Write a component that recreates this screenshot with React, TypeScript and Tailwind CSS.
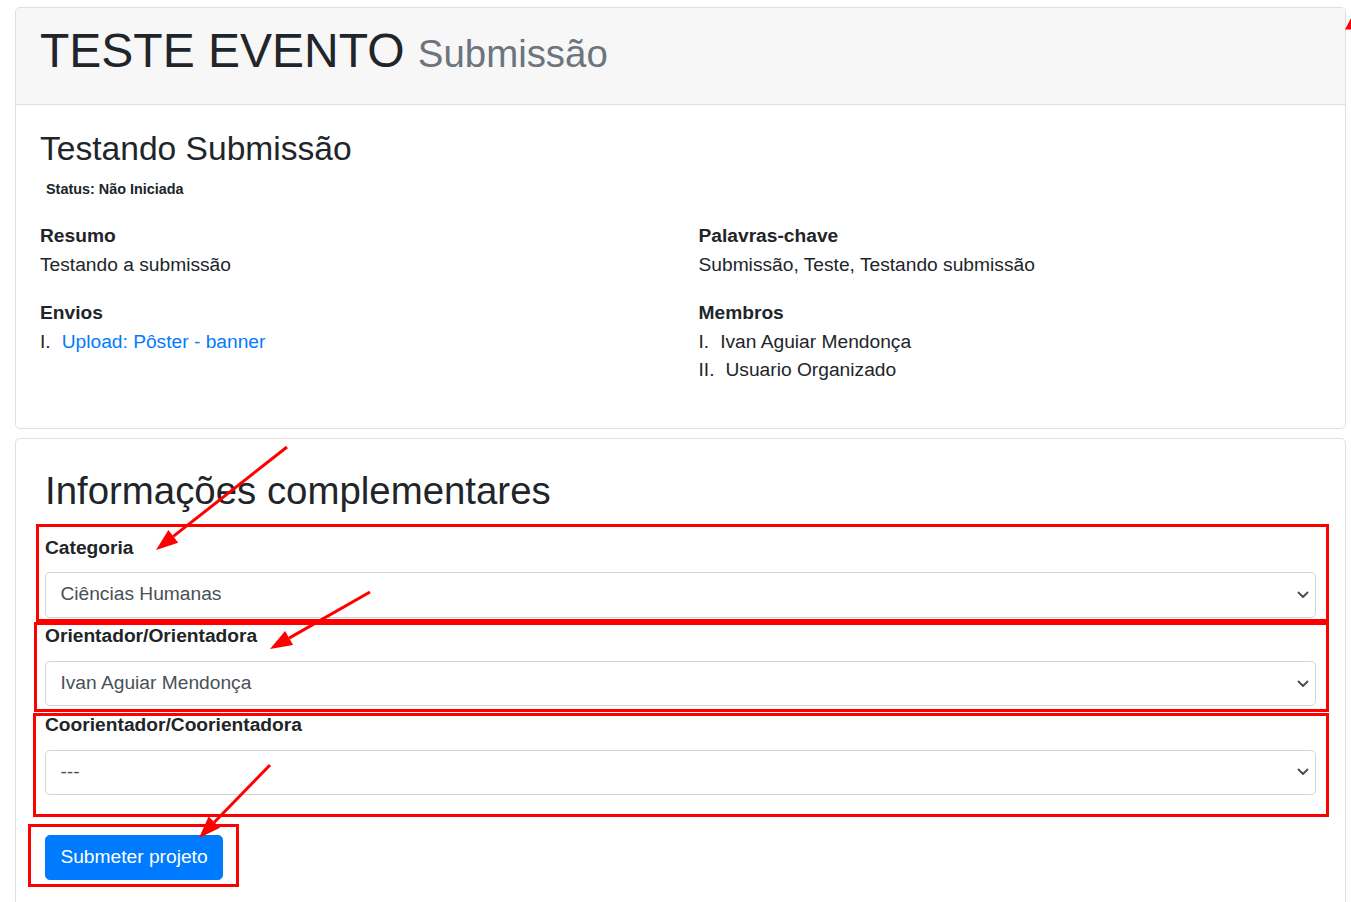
import React from "react";

const Chevron = () => (
  <svg width="12" height="8" viewBox="0 0 12 8" className="shrink-0">
    <path d="M1.5 1.5 L6 6 L10.5 1.5" fill="none" stroke="#4a4f55" strokeWidth="1.9" strokeLinecap="round" strokeLinejoin="round" />
  </svg>
);

const SelectBox = ({ value }: { value: string }) => (
  <div className="flex h-[45.6px] items-center justify-between rounded-[4.8px] border border-[#ced4da] bg-white pl-[14.4px] pr-[6px] text-[#495057]">
    <span>{value}</span>
    <Chevron />
  </div>
);

const Field = ({ label, value }: { label: string; value: string }) => (
  <div className="mb-[4.8px]">
    <div className="mb-[9.6px] font-bold">{label}</div>
    <SelectBox value={value} />
  </div>
);

const Numbered = ({ n, children }: { n: string; children: React.ReactNode }) => (
  <div className="flex">
    <span className="mr-[11px]">{n}</span>
    {children}
  </div>
);

// Review markings drawn on top of the page
const Markup = () => (
  <svg className="pointer-events-none absolute left-0 top-0" width="1351" height="902" viewBox="0 0 1351 902">
    <g fill="none" stroke="#ff0000" strokeWidth="3">
      <rect x="37.5" y="525.5" width="1290" height="95" />
      <rect x="35.5" y="623.5" width="1292" height="87" />
      <rect x="34.5" y="714.5" width="1293" height="101" />
      <rect x="29.5" y="825.5" width="208" height="60" />
      <line x1="287" y1="447" x2="173.3" y2="536.4" />
      <line x1="370" y1="592" x2="289.1" y2="638.1" />
      <line x1="270" y1="765" x2="214.3" y2="822.2" />
    </g>
    <g fill="#ff0000">
      <polygon points="156,550 178.2,542.7 168.4,530.1" />
      <polygon points="270,649 293.1,645.1 285.1,631.1" />
      <polygon points="199,838 220,827.8 208.6,816.6" />
      <polygon points="1351,18 1345,29.5 1351,29.5" />
    </g>
  </svg>
);

export default function App() {
  return (
    <div className="relative h-[902px] overflow-hidden bg-white pl-[15px] pr-[5px] pt-[7px] font-['Liberation_Sans',Arial,sans-serif] text-[19.2px] leading-[28.8px] text-[#212529]">
      {/* event card */}
      <div className="mb-[8.6px] rounded-[4.8px] border border-[#dfdfdf]">
        <div className="rounded-t-[4.8px] border-b border-[#dfdfdf] bg-[#f7f7f7] px-[24px] py-[14.4px]">
          <h1 className="mb-[9.6px] text-[48px] font-normal leading-[57.6px]">
            TESTE EVENTO <small className="text-[38.4px] leading-none text-[#6c757d]">Submissão</small>
          </h1>
        </div>
        <div className="p-[24px]">
          <h3 className="mb-[9.6px] text-[33.6px] font-normal leading-[40.3px]">Testando Submissão</h3>
          <p className="mb-[21.6px] ml-[6px] text-[14.4px] font-bold leading-[21.6px]">Status: Não Iniciada</p>
          <div className="grid grid-cols-2 gap-x-[36px]">
            <div className="mb-[19.2px]">
              <div className="font-bold">Resumo</div>
              <div>Testando a submissão</div>
            </div>
            <div className="mb-[19.2px]">
              <div className="font-bold">Palavras-chave</div>
              <div>Submissão, Teste, Testando submissão</div>
            </div>
            <div className="mb-[19.2px]">
              <div className="font-bold">Envios</div>
              <Numbered n="I.">
                <a className="text-[#007bff]">Upload: Pôster - banner</a>
              </Numbered>
            </div>
            <div className="mb-[19.2px]">
              <div className="font-bold">Membros</div>
              <Numbered n="I.">
                <span>Ivan Aguiar Mendonça</span>
              </Numbered>
              <Numbered n="II.">
                <span>Usuario Organizado</span>
              </Numbered>
            </div>
          </div>
        </div>
      </div>

      {/* extra info form */}
      <div className="rounded-[4.8px] border border-[#dfdfdf] px-[29px] pb-[29px] pt-[29px]">
        <h2 className="mb-[19.6px] text-[38.4px] font-normal leading-[46px]">Informações complementares</h2>
        <Field label="Categoria" value="Ciências Humanas" />
        <Field label="Orientador/Orientadora" value="Ivan Aguiar Mendonça" />
        <Field label="Coorientador/Coorientadora" value="---" />
        <button className="mt-[35px] h-[45px] rounded-[4.8px] border border-[#007bff] bg-[#007bff] px-[14.4px] text-white">
          Submeter projeto
        </button>
      </div>

      <Markup />
    </div>
  );
}
